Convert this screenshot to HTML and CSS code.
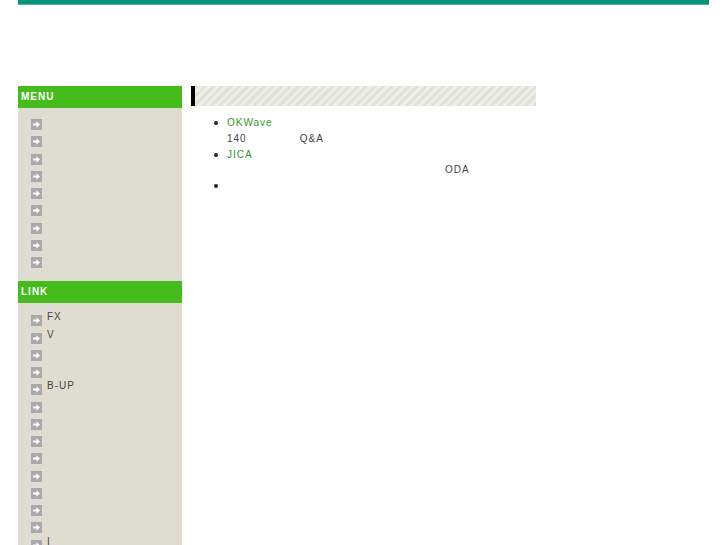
FILE: index.html
```html
<!DOCTYPE html>
<html lang="ja">
<head>
    <meta charset="UTF-8">
    <meta name="viewport" content="width=device-width, initial-scale=1.0">
    <title>Top</title>
    <link rel="stylesheet" href="styles.css">
</head>
<body>
    <svg class="defs" width="0" height="0">
        <symbol id="arw" viewBox="0 0 11 11">
            <rect width="11" height="11" fill="#a9a9a9"/>
            <path d="M2 4.5h3.5V2.2L9 5.5 5.5 8.8V6.5H2z" fill="#ffffff"/>
        </symbol>
    </svg>

    <div class="page">
        <!-- Top Bar -->
        <div class="top-bar"></div>

        <div class="wrap">
            <!-- Side Menu -->
            <div class="side">
                <div class="side-head">MENU</div>
                <ul class="side-list">
                    <li><svg class="arw"><use href="#arw"/></svg><a href="#"></a></li>
                    <li><svg class="arw"><use href="#arw"/></svg><a href="#"></a></li>
                    <li><svg class="arw"><use href="#arw"/></svg><a href="#"></a></li>
                    <li><svg class="arw"><use href="#arw"/></svg><a href="#"></a></li>
                    <li><svg class="arw"><use href="#arw"/></svg><a href="#"></a></li>
                    <li><svg class="arw"><use href="#arw"/></svg><a href="#"></a></li>
                    <li><svg class="arw"><use href="#arw"/></svg><a href="#"></a></li>
                    <li><svg class="arw"><use href="#arw"/></svg><a href="#"></a></li>
                    <li><svg class="arw"><use href="#arw"/></svg><a href="#"></a></li>
                </ul>

                <div class="side-head">LINK</div>
                <ul class="side-list links">
                    <li><svg class="arw"><use href="#arw"/></svg><a href="#">FX</a></li>
                    <li><svg class="arw"><use href="#arw"/></svg><a href="#">V</a></li>
                    <li><svg class="arw"><use href="#arw"/></svg><a href="#"></a></li>
                    <li><svg class="arw"><use href="#arw"/></svg><a href="#"></a></li>
                    <li><svg class="arw"><use href="#arw"/></svg><a href="#">B-UP</a></li>
                    <li><svg class="arw"><use href="#arw"/></svg><a href="#"></a></li>
                    <li><svg class="arw"><use href="#arw"/></svg><a href="#"></a></li>
                    <li><svg class="arw"><use href="#arw"/></svg><a href="#"></a></li>
                    <li><svg class="arw"><use href="#arw"/></svg><a href="#"></a></li>
                    <li><svg class="arw"><use href="#arw"/></svg><a href="#"></a></li>
                    <li><svg class="arw"><use href="#arw"/></svg><a href="#"></a></li>
                    <li><svg class="arw"><use href="#arw"/></svg><a href="#"></a></li>
                    <li><svg class="arw"><use href="#arw"/></svg><a href="#"></a></li>
                    <li><svg class="arw"><use href="#arw"/></svg><a href="#">I</a></li>
                </ul>
            </div>

            <!-- Main Content -->
            <div class="main">
                <div class="main-head"></div>
                <ul class="news">
                    <li>
                        <a href="#">OKWave</a><br>
                        140<span class="sp sp-qa"></span>Q&amp;A
                    </li>
                    <li>
                        <a href="#">JICA</a><br>
                        <span class="sp sp-oda"></span>ODA
                    </li>
                    <li></li>
                </ul>
            </div>
        </div>
    </div>
</body>
</html>
```

FILE: styles.css
```css
* {
    margin: 0;
    padding: 0;
    box-sizing: border-box;
}

body {
    background-color: #ffffff;
    color: #444444;
    font-family: "Liberation Sans", Arial, "Noto Sans CJK JP", sans-serif;
    font-size: 10px;
    letter-spacing: 1px;
}

.defs {
    position: absolute;
}

.page {
    width: 691px;
    margin: 0 18px;
}

.top-bar {
    height: 5px;
    background-color: #00937a;
    border-bottom: 1px solid #48b39e;
}

.wrap {
    display: flex;
    gap: 9px;
    padding-top: 81px;
}

/* side menu */
.side {
    width: 164px;
    background-color: #dfddd1;
    padding-bottom: 20px;
}

.side-head {
    height: 22px;
    line-height: 22px;
    padding-left: 3px;
    background-color: #45bb1c;
    color: #ffffff;
    font-weight: bold;
}

.side-list {
    list-style: none;
    padding: 7px 0 11px;
}

.side-list.links {
    padding-top: 8px;
}

.side-list li {
    display: flex;
    gap: 5px;
    height: 17.25px;
    padding-left: 13px;
    line-height: 12px;
}

.side-list a {
    color: #444444;
    text-decoration: none;
}

.arw {
    width: 11px;
    height: 11px;
    margin-top: 4px;
    flex-shrink: 0;
}

/* main */
.main {
    flex: 1;
}

.main-head {
    width: 345px;
    height: 20px;
    border-left: 4px solid #000000;
    background-color: #efeee7;
    background-image: repeating-linear-gradient(135deg, #e2e1d5 0, #e2e1d5 3px, #efeee7 3px, #efeee7 6px);
}

.news {
    list-style: none;
    margin-top: 9px;
    padding-left: 36px;
    line-height: 15.75px;
}

.news li {
    position: relative;
    min-height: 15.75px;
}

.news li::before {
    content: "";
    position: absolute;
    left: -13px;
    top: 6px;
    width: 4px;
    height: 4px;
    border-radius: 50%;
    background-color: #222222;
}

.news a {
    color: #2f9a2a;
    text-decoration: none;
}

.sp {
    display: inline-block;
}

.sp-qa {
    width: 53px;
}

.sp-oda {
    width: 218px;
}
```
